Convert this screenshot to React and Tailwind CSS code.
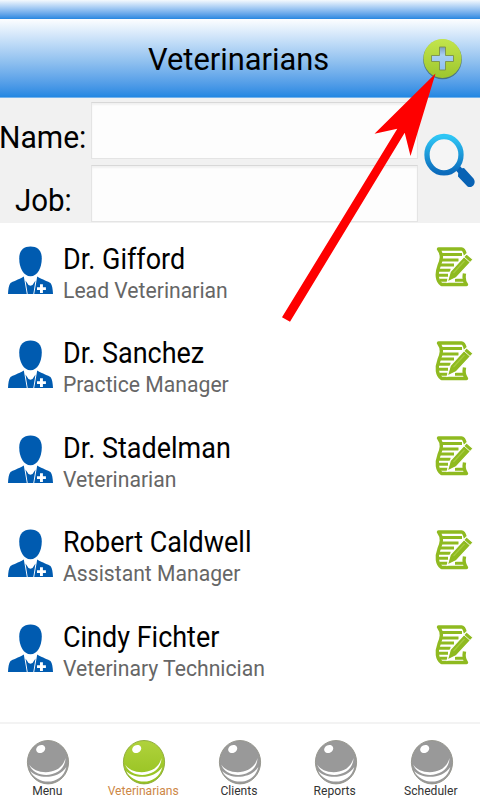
import React, { useState } from 'react';

const staff = [
   { name: 'Dr. Gifford', job: 'Lead Veterinarian' },
   { name: 'Dr. Sanchez', job: 'Practice Manager' },
   { name: 'Dr. Stadelman', job: 'Veterinarian' },
   { name: 'Robert Caldwell', job: 'Assistant Manager' },
   { name: 'Cindy Fichter', job: 'Veterinary Technician' },
];

const tabs = ['Menu', 'Veterinarians', 'Clients', 'Reports', 'Scheduler'];

const AddIcon = () => (
   <svg width="44" height="46" viewBox="0 0 44 46">
      <defs>
         <linearGradient id="addFill" x1="0" y1="0" x2="0" y2="1">
            <stop offset="0" stopColor="#c3e54c" />
            <stop offset="1" stopColor="#9dc62d" />
         </linearGradient>
         <linearGradient id="plusFill" x1="0" y1="0" x2="0" y2="1">
            <stop offset="0" stopColor="#7a9cc0" />
            <stop offset="0.35" stopColor="#a9cff2" />
            <stop offset="1" stopColor="#8ec0f0" />
         </linearGradient>
      </defs>
      <ellipse cx="21.500" cy="23.400" rx="19.400" ry="19.800" fill="#3c5c58" opacity="0.7" />
      <ellipse cx="21.500" cy="22.500" rx="19" ry="19.500" fill="url(#addFill)" />
      <path d="M18.500 11h6v8.500h8v6h-8V34h-6v-8.500h-8v-6h8z" fill="url(#plusFill)" stroke="#7c9147" strokeWidth="0.900" />
   </svg>
);

const SearchIcon = () => (
   <svg width="56" height="60" viewBox="0 0 56 60">
      <defs>
         <linearGradient id="lens" x1="0" y1="0" x2="0" y2="1">
            <stop offset="0" stopColor="#2fc6f5" />
            <stop offset="1" stopColor="#0b6abb" />
         </linearGradient>
      </defs>
      <path d="M33 39.500l4.500-4 2.500 2.700 2-.2L51.500 48.500c3.500 5-1.500 10.500-6 8L36 46.500l.2-3.500z" fill="#0862b4" />
      <ellipse cx="22" cy="24.700" rx="17" ry="18.200" fill="#f5f5f5" stroke="url(#lens)" strokeWidth="5.300" />
   </svg>
);

const DoctorIcon = () => (
   <svg width="46" height="49" viewBox="0 0 46 49">
      <g fill="#005bb0">
         <path d="M22.500 0.500c7 0 11.300 4 11.300 12 0 9.500-4.500 17.800-11.300 17.800S11.200 22 11.200 12.500C11.200 4.500 15.500 0.500 22.500 0.500z" />
         <path d="M15.800 30.500L18.800 48H0c.3-5 .7-8.500 2.500-11 2-1.500 8-3.200 13.300-6.500z" />
         <path d="M29.200 30.500L26.200 48H45c-.3-5-.7-8.500-2.500-11-2-1.500-8-3.200-13.300-6.500z" />
         <path d="M17.500 34.500l3 4.500 2 .7 2-.7 3-4.500L25.300 48h-5.600z" />
      </g>
      <path d="M32 38.300h2.900v3h3v2.700h-3v3H32v-3h-3v-2.700h3z" fill="#fff" />
   </svg>
);

const EditIcon = () => (
   <svg width="39" height="42" viewBox="0 0 39 42">
      <g fill="none" stroke="#8fba20" strokeLinejoin="round">
         <path d="M30.500 9C29.500 5 28 3 26.500 3H3.500c4.500 6 3 11 .5 17-3 8-2 15 2.500 18.500h25c-2.500-3-3-6-2-11" strokeWidth="3.400" />
         <path d="M6 8.500h21M6 14h17.500M5 19h14M3.500 24.200h12M3 29.200h10M4.500 34.200h8M20 34.200h9" strokeWidth="3.100" />
      </g>
      <path d="M12.300 36l3-10.500L31.500 7.800l6.700 5.700L21.500 31.500z" fill="#8fba20" stroke="#fff" strokeWidth="1.200" />
      <path d="M29 11l6 5.300" stroke="#fff" strokeWidth="0.900" />
      <path d="M18.500 27L29.500 15" stroke="#a5cb40" strokeWidth="1.200" />
   </svg>
);

const BallIcon = ({ active }) => (
   <svg width="44" height="46" viewBox="0 0 44 46">
      <defs>
         <linearGradient id="ballGreen" x1="0" y1="0" x2="0" y2="1">
            <stop offset="0" stopColor="#b0d23c" />
            <stop offset="1" stopColor="#94c11f" />
         </linearGradient>
      </defs>
      <ellipse cx="22" cy="23.200" rx="20.600" ry="21.700" fill={active ? 'url(#ballGreen)' : '#999'} stroke={active ? '#8ba837' : '#929289'} strokeWidth="0.900" />
      <path d="M3.300 25.500C9 36 35 37.500 39.500 19 39 39.500 8 41 3.300 25.500z" fill="#fff" />
      <path d="M4.200 32C12 40.500 33 40 40.300 28 36 47 11 46.500 4.200 32z" fill="#fff" />
      <ellipse cx="14.700" cy="10" rx="4.700" ry="3.900" transform="rotate(-25 14.700 10)" fill="#fff" />
   </svg>
);

const PointerArrow = () => (
   <svg className="absolute left-[280px] top-[70px]" width="160" height="256" viewBox="280 70 160 256">
      <path d="M435.500 73.500L374.500 133.800 397.300 128.700 282 317.300 290 321.700 404.700 132.700 410.500 156z" fill="#fe0000" />
   </svg>
);

const App = () => {
   const [name, setName] = useState('');
   const [job, setJob] = useState('');
   const [currentTab, setCurrentTab] = useState('Veterinarians');

   const inputClass = 'block w-[327px] h-[57px] bg-[#fdfdfd] border border-[#e4e4e4] border-t-[#d8d8d8] shadow-[inset_0_2px_2px_#f1f1f1] px-2 text-[28px] outline-none';

   return (
      <div className="relative w-[480px] h-[800px] flex flex-col overflow-hidden bg-white font-[Roboto,sans-serif] text-black">
         <div className="h-[19px] shrink-0 bg-linear-to-b from-[#f4f9fd] to-[#2587e0]" />

         <header className="h-[79px] shrink-0 flex items-center pl-[148px] pr-[15px] justify-between bg-linear-to-b from-[#fdfeff] via-[#8fc0ef] via-55% to-[#2287e2] border-b border-[#72b2ec]">
            <h1 className="w-[190px] pt-[3px] text-[31px] leading-[36px] whitespace-nowrap origin-left scale-x-[0.995]">Veterinarians</h1>
            <button className="mt-[2px]"><AddIcon /></button>
         </header>

         <section className="h-[125px] shrink-0 flex bg-[#f1f1f1]">
            <div className="w-[91px] shrink-0 flex flex-col pt-[21px] gap-[26px] text-[31px] leading-[37px] whitespace-nowrap">
               <label className="w-[91px] -ml-px origin-left scale-x-[0.97]">Name:</label>
               <label className="w-[76px] ml-[15px] origin-left scale-x-[0.95]">Job:</label>
            </div>
            <div className="pt-1 flex flex-col gap-[6px]">
               <input className={inputClass} value={name} onChange={(e) => setName(e.target.value)} />
               <input className={inputClass} value={job} onChange={(e) => setJob(e.target.value)} />
            </div>
            <button className="ml-1 mt-8 self-start"><SearchIcon /></button>
         </section>

         <ul className="flex-1">
            {staff.map((person) => (
               <li key={person.name} className="h-[94.400px] flex items-start pt-[23px] pl-2 pr-[6px]">
                  <DoctorIcon />
                  <div className="flex-1 ml-[9px] -mt-[3px] whitespace-nowrap">
                     <p className="text-[29px] leading-[33px] origin-left scale-x-[0.93]">{person.name}</p>
                     <p className="text-[22px] leading-[30px] text-[#666] origin-left scale-x-[0.962]">{person.job}</p>
                  </div>
                  <EditIcon />
               </li>
            ))}
         </ul>

         <nav className="h-[78px] shrink-0 flex border-t-2 border-[#f3f3f3]">
            {tabs.map((tab) => (
               <button
                  key={tab}
                  onClick={() => setCurrentTab(tab)}
                  className="w-[96px] flex flex-col items-center pt-[15px]"
               >
                  <BallIcon active={tab === currentTab} />
                  <span className={`text-[13px] leading-[14px] -mt-[1px] -ml-[2px] whitespace-nowrap scale-x-[0.93] ${tab === currentTab ? 'text-[#cd8746]' : 'text-[#333]'}`}>
                     {tab}
                  </span>
               </button>
            ))}
         </nav>

         <PointerArrow />
      </div>
   );
};

export default App;
